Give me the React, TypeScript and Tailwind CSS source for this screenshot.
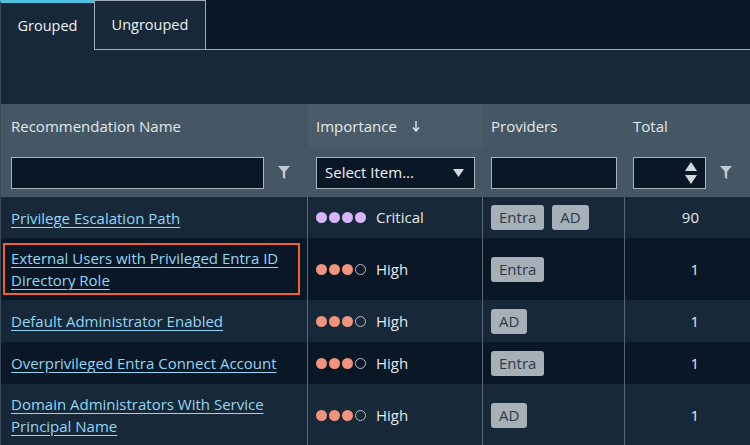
import React from "react";

const Funnel = () => (
  <svg width="12" height="13" viewBox="0 0 12 13" className="block">
    <polygon points="0,0 12,0 7.2,5.5 7.2,13 4.8,11.5 4.8,5.5" fill="#c3c9cf" />
  </svg>
);

const Dots = ({ level }: { level: "critical" | "high" }) => {
  if (level === "critical") {
    return (
      <div className="flex gap-[2px]">
        {[0, 1, 2, 3].map((i) => (
          <span key={i} className="block w-[11px] h-[11px] rounded-full bg-[#d9b6fb]" />
        ))}
      </div>
    );
  }
  return (
    <div className="flex gap-[2px]">
      {[0, 1, 2].map((i) => (
        <span key={i} className="block w-[11px] h-[11px] rounded-full bg-[#f2937c]" />
      ))}
      <span className="block w-[11px] h-[11px] rounded-full border-[1.5px] border-[#b7bec5]" />
    </div>
  );
};

const Badge = ({ t }: { t: string }) => (
  <span className="inline-flex items-center h-[25px] px-[8px] rounded-[3px] bg-[#a7afb7] text-[#2c3b4a] text-[15px]">
    {t}
  </span>
);

type Row = {
  name: string[];
  level: "critical" | "high";
  label: string;
  providers: string[];
  total: string;
  h: string;
  dark: boolean;
  boxed?: boolean;
};

const rows: Row[] = [
  { name: ["Privilege Escalation Path"], level: "critical", label: "Critical", providers: ["Entra", "AD"], total: "90", h: "h-[41px]", dark: false },
  { name: ["External Users with Privileged Entra ID", "Directory Role"], level: "high", label: "High", providers: ["Entra"], total: "1", h: "h-[62px]", dark: true, boxed: true },
  { name: ["Default Administrator Enabled"], level: "high", label: "High", providers: ["AD"], total: "1", h: "h-[42px]", dark: false },
  { name: ["Overprivileged Entra Connect Account"], level: "high", label: "High", providers: ["Entra"], total: "1", h: "h-[42px]", dark: true },
  { name: ["Domain Administrators With Service", "Principal Name"], level: "high", label: "High", providers: ["AD"], total: "1", h: "h-[62px]", dark: false },
];

export default function App() {
  return (
    <div
      className="w-[750px] h-[445px] overflow-hidden bg-[#0a1726] text-[#e2e8ec] text-[15px]"
      style={{ fontFamily: '"Open Sans", "Noto Sans", sans-serif' }}
    >
      {/* Tabs */}
      <div className="flex h-[50px]">
        <div className="w-[94px] bg-[#172839] border-t-[3px] border-[#4cc0de] border-l border-l-[#3b4a58] flex items-center justify-center pb-[1px] text-[#eef2f5] text-[14.5px]">
          Grouped
        </div>
        <div className="w-[112px] bg-[#172839] border border-[#a3abb3] flex items-center justify-center text-[#eef2f5] text-[14.5px]">
          Ungrouped
        </div>
        <div className="flex-1 border-b border-[#a3abb3]" />
      </div>
      {/* spacer panel */}
      <div className="h-[54px] bg-[#172839] border-l border-[#3b4a58]" />
      {/* Table */}
      <div className="grid grid-cols-[307px_175px_142px_126px] border-l border-[#3b4a58]">
        {/* header row */}
        <div className="h-[43px] bg-[#455765] flex items-center pl-[10px] pt-[2px]">Recommendation Name</div>
        <div className="h-[43px] bg-[#4a5c6a] flex items-center pl-[8px] pt-[2px]">
          Importance
          <svg width="8" height="11" viewBox="0 0 8 11" className="ml-[15px]">
            <path d="M4 0 V9.5 M1 6.5 L4 10 L7 6.5" stroke="#dfe5ea" strokeWidth="1.4" fill="none" />
          </svg>
        </div>
        <div className="h-[43px] bg-[#455765] flex items-center pl-[8px] pt-[2px]">Providers</div>
        <div className="h-[43px] bg-[#455765] flex items-center pl-[8px] pt-[2px]">Total</div>
        {/* filter row */}
        <div className="h-[50px] bg-[#455765] flex items-center pl-[10px] pt-[1px]">
          <div className="w-[253px] h-[32px] bg-[#0a1726] border border-[#aab2ba]" />
          <div className="ml-[14px]">
            <Funnel />
          </div>
        </div>
        <div className="h-[50px] bg-[#455765] flex items-center pl-[8px] pt-[1px]">
          <div className="w-[159px] h-[32px] bg-[#0a1726] border border-[#aab2ba] flex items-center pl-[8px] pr-[10px] justify-between text-[#eef2f5]">
            <span>Select Item...</span>
            <svg width="11" height="8" viewBox="0 0 11 8">
              <polygon points="0,0 11,0 5.5,8" fill="#d2d8dd" />
            </svg>
          </div>
        </div>
        <div className="h-[50px] bg-[#455765] flex items-center pl-[8px] pt-[1px]">
          <div className="w-[126px] h-[32px] bg-[#0a1726] border border-[#aab2ba]" />
        </div>
        <div className="h-[50px] bg-[#455765] flex items-center pl-[8px] pt-[1px]">
          <div className="w-[73px] h-[32px] bg-[#0a1726] border border-[#aab2ba] flex flex-col items-end justify-center gap-[4px] pr-[8px]">
            <svg width="12" height="9" viewBox="0 0 12 9">
              <polygon points="6,0 12,9 0,9" fill="#d2d8dd" />
            </svg>
            <svg width="12" height="9" viewBox="0 0 12 9">
              <polygon points="0,0 12,0 6,9" fill="#d2d8dd" />
            </svg>
          </div>
          <div className="ml-[14px]">
            <Funnel />
          </div>
        </div>
        {/* body rows */}
        {rows.map((r, i) => {
          const bg = r.dark ? "bg-[#0a1726]" : "bg-[#172839]";
          return (
            <React.Fragment key={i}>
              <div className={`${r.h} ${bg} flex items-center ${r.boxed ? "pl-[2px]" : "pl-[10px]"} border-r border-[#5a6672]`}>
                {r.boxed ? (
                  <div className="w-[297px] h-[52px] border-2 border-[#f4621c] pl-[6px] flex flex-col justify-center leading-[22px]">
                    {r.name.map((n, j) => (
                      <div key={j}>
                        <span className="text-[#93d6f3] underline underline-offset-[3px] cursor-pointer">{n}</span>
                      </div>
                    ))}
                  </div>
                ) : (
                  <div className="leading-[22px]">
                    {r.name.map((n, j) => (
                      <div key={j}>
                        <span className="text-[#93d6f3] underline underline-offset-[3px] cursor-pointer">{n}</span>
                      </div>
                    ))}
                  </div>
                )}
              </div>
              <div className={`${r.h} ${bg} flex items-center pl-[8px] border-r border-[#5a6672]`}>
                <Dots level={r.level} />
                <span className="ml-[10px]">{r.label}</span>
              </div>
              <div className={`${r.h} ${bg} flex items-center pl-[8px] gap-[8px] border-r border-[#5a6672]`}>
                {r.providers.map((p) => (
                  <Badge key={p} t={p} />
                ))}
              </div>
              <div className={`${r.h} ${bg} flex items-center justify-end pr-[52px]`}>{r.total}</div>
            </React.Fragment>
          );
        })}
      </div>
    </div>
  );
}
